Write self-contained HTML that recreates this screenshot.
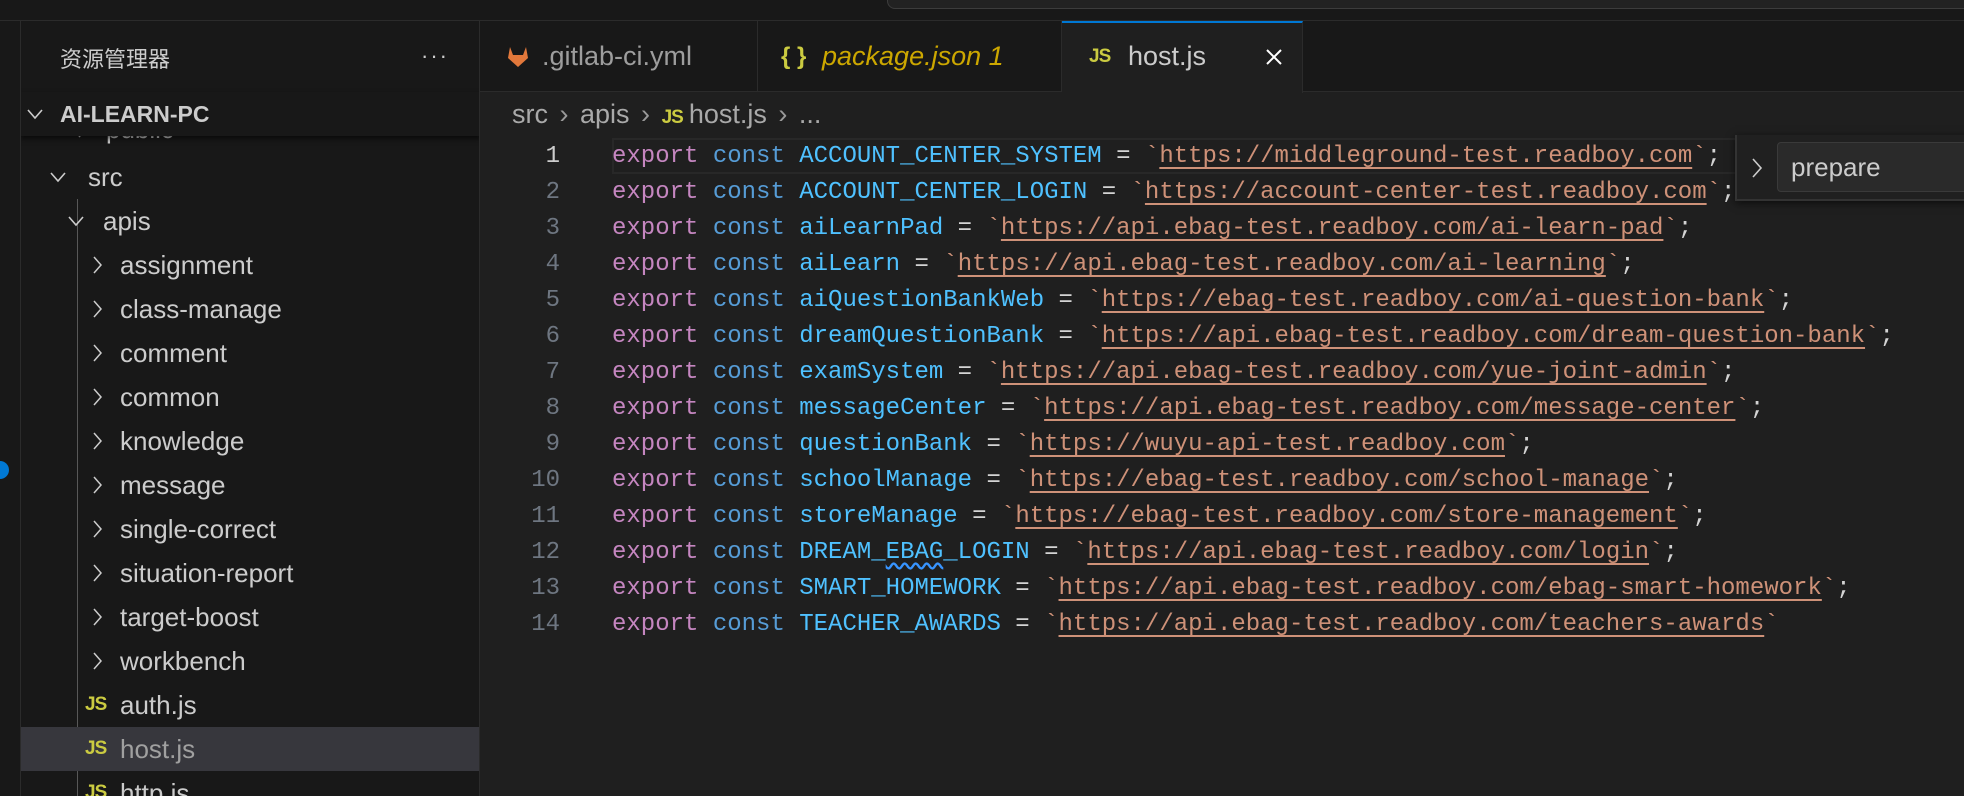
<!DOCTYPE html>
<html><head><meta charset="utf-8"><style>
*{margin:0;padding:0;box-sizing:border-box}
html,body{width:1964px;height:796px;overflow:hidden}
body{background:#1f1f1f;position:relative;font-family:"Liberation Sans","Noto Sans CJK SC",sans-serif;color:#cccccc}
.abs{position:absolute}
#top{left:0;top:0;width:1964px;height:21px;background:#181818;border-bottom:1px solid #2b2b2b}
#search{left:887px;top:-10px;width:1100px;height:19px;border:1px solid #3c3c3c;border-radius:8px;background:#222}
#act{left:0;top:21px;width:21px;height:775px;background:#181818;border-right:1px solid #2b2b2b}
#side{left:21px;top:21px;width:459px;height:775px;background:#181818;border-right:1px solid #2b2b2b;overflow:hidden}
.row{position:absolute;left:0;width:459px;height:44px;line-height:44px;font-size:26px;color:#cccccc;white-space:nowrap}
.chev{position:absolute;top:12px;width:11px;height:20px}
.js{font-family:"Liberation Sans",sans-serif;font-weight:bold;color:#cbcb41;font-size:19px;position:absolute;letter-spacing:-1px}
#tabs{left:480px;top:21px;width:1484px;height:71px;background:#181818;border-bottom:1px solid #2b2b2b}
.tab{position:absolute;top:0;height:71px;line-height:71px;font-size:27px;border-right:1px solid #2b2b2b;color:#9d9d9d}
.ln{position:absolute;width:80px;text-align:right;left:480px;font-family:"Liberation Mono",monospace;font-size:24px;color:#6e7681;height:36px;line-height:36px}
.code{position:absolute;left:612px;font-family:"Liberation Mono",monospace;font-size:24px;height:36px;line-height:36px;white-space:pre;color:#d4d4d4}
.k{color:#c586c0}.c{color:#569cd6}.v{color:#4fc1ff}.s{color:#ce9178}.u{text-decoration:underline;text-underline-offset:5px}
</style></head><body>
<div id="top" class="abs"></div>
<div id="search" class="abs"></div>
<div id="act" class="abs"></div>
<div class="abs" style="left:-9px;top:461px;width:18px;height:18px;border-radius:50%;background:#0078d4"></div>
<div id="side" class="abs">
  <div class="abs" style="left:39px;top:21px;font-size:22px;color:#cccccc">资源管理器</div>
  <div class="abs" style="left:400px;top:22px;font-size:22px;color:#cccccc;letter-spacing:2px">···</div>
  <div class="row" style="top:86px"><svg class="chev" style="left:56px" viewBox="0 0 11 20"><path d="M2 2l7 8-7 8" stroke="#ccc" stroke-width="1.5" fill="none"/></svg><span style="position:absolute;left:85px">public</span></div>
  <div class="abs" style="left:0;top:71px;width:459px;height:44px;background:#181818;box-shadow:0 3px 5px rgba(0,0,0,.6)">
    <svg class="abs" style="left:5px;top:16px" width="18" height="12" viewBox="0 0 18 12"><path d="M2 2l7 8 7-8" stroke="#ccc" stroke-width="1.6" fill="none"/></svg>
    <span class="abs" style="left:39px;top:0;line-height:44px;font-size:23px;font-weight:bold;color:#cccccc">AI-LEARN-PC</span>
  </div>
  <div class="abs" style="left:56px;top:178px;width:1px;height:600px;background:#585858"></div>
  <div class="row" style="top:134px"><svg class="abs" style="left:28px;top:16px" width="18" height="12" viewBox="0 0 18 12"><path d="M2 2l7 8 7-8" stroke="#ccc" stroke-width="1.6" fill="none"/></svg><span style="position:absolute;left:67px">src</span></div>
  <div class="row" style="top:178px"><svg class="abs" style="left:46px;top:16px" width="18" height="12" viewBox="0 0 18 12"><path d="M2 2l7 8 7-8" stroke="#ccc" stroke-width="1.6" fill="none"/></svg><span style="position:absolute;left:82px">apis</span></div>
  <div class="row" style="top:222px"><svg class="chev" style="left:71px" viewBox="0 0 11 20"><path d="M2 2l7 8-7 8" stroke="#ccc" stroke-width="1.5" fill="none"/></svg><span style="position:absolute;left:99px">assignment</span></div>
  <div class="row" style="top:266px"><svg class="chev" style="left:71px" viewBox="0 0 11 20"><path d="M2 2l7 8-7 8" stroke="#ccc" stroke-width="1.5" fill="none"/></svg><span style="position:absolute;left:99px">class-manage</span></div>
  <div class="row" style="top:310px"><svg class="chev" style="left:71px" viewBox="0 0 11 20"><path d="M2 2l7 8-7 8" stroke="#ccc" stroke-width="1.5" fill="none"/></svg><span style="position:absolute;left:99px">comment</span></div>
  <div class="row" style="top:354px"><svg class="chev" style="left:71px" viewBox="0 0 11 20"><path d="M2 2l7 8-7 8" stroke="#ccc" stroke-width="1.5" fill="none"/></svg><span style="position:absolute;left:99px">common</span></div>
  <div class="row" style="top:398px"><svg class="chev" style="left:71px" viewBox="0 0 11 20"><path d="M2 2l7 8-7 8" stroke="#ccc" stroke-width="1.5" fill="none"/></svg><span style="position:absolute;left:99px">knowledge</span></div>
  <div class="row" style="top:442px"><svg class="chev" style="left:71px" viewBox="0 0 11 20"><path d="M2 2l7 8-7 8" stroke="#ccc" stroke-width="1.5" fill="none"/></svg><span style="position:absolute;left:99px">message</span></div>
  <div class="row" style="top:486px"><svg class="chev" style="left:71px" viewBox="0 0 11 20"><path d="M2 2l7 8-7 8" stroke="#ccc" stroke-width="1.5" fill="none"/></svg><span style="position:absolute;left:99px">single-correct</span></div>
  <div class="row" style="top:530px"><svg class="chev" style="left:71px" viewBox="0 0 11 20"><path d="M2 2l7 8-7 8" stroke="#ccc" stroke-width="1.5" fill="none"/></svg><span style="position:absolute;left:99px">situation-report</span></div>
  <div class="row" style="top:574px"><svg class="chev" style="left:71px" viewBox="0 0 11 20"><path d="M2 2l7 8-7 8" stroke="#ccc" stroke-width="1.5" fill="none"/></svg><span style="position:absolute;left:99px">target-boost</span></div>
  <div class="row" style="top:618px"><svg class="chev" style="left:71px" viewBox="0 0 11 20"><path d="M2 2l7 8-7 8" stroke="#ccc" stroke-width="1.5" fill="none"/></svg><span style="position:absolute;left:99px">workbench</span></div>
  <div class="row" style="top:662px"><span class="js" style="left:64px">JS</span><span style="position:absolute;left:99px">auth.js</span></div>
  <div class="row" style="top:706px;background:#37373d;left:0"><span class="js" style="left:64px">JS</span><span style="position:absolute;left:99px;color:#a0a0a0">host.js</span></div>
  <div class="row" style="top:750px"><span class="js" style="left:64px">JS</span><span style="position:absolute;left:99px">http.js</span></div>
</div>
<div id="tabs" class="abs">
  <div class="tab" style="left:0;width:278px">
    <svg class="abs" style="left:27px;top:24px" width="22" height="24" viewBox="0 0 22 24"><path d="M11 22L1 13 3 2l3 8h10l3-8 2 11z" fill="#e2783b"/></svg>
    <span class="abs" style="left:62px">.gitlab-ci.yml</span></div>
  <div class="tab" style="left:278px;width:304px">
    <span class="abs" style="left:23px;color:#cbcb41;font-size:24px;font-weight:bold">{ }</span>
    <span class="abs" style="left:64px;color:#cca700;font-style:italic">package.json 1</span></div>
  <div class="tab" style="left:582px;width:241px;background:#1f1f1f;border-top:2px solid #0078d4;height:72px;color:#ffffff">
    <span class="js" style="left:27px;top:-2px;line-height:71px">JS</span>
    <span class="abs" style="left:66px;top:-2px;color:#cccccc">host.js</span>
    <svg class="abs" style="left:202px;top:24px" width="20" height="20" viewBox="0 0 20 20"><path d="M3 3l14 14M17 3L3 17" stroke="#fff" stroke-width="2"/></svg></div>
</div>
<div class="abs" style="left:512px;top:96px;height:36px;line-height:36px;font-size:27px;color:#a9a9a9;white-space:nowrap">src <span style="color:#999;margin:0 4px">&#x203A;</span> apis <span style="color:#999;margin:0 4px">&#x203A;</span> <span style="color:#cbcb41;font-weight:bold;font-size:19px;letter-spacing:-1px;margin-right:6px">JS</span>host.js <span style="color:#999;margin:0 4px">&#x203A;</span> ...</div>
<div class="abs" style="left:612px;top:138px;width:1125px;height:36px;border:2px solid #282828"></div>
<div class="ln" style="top:139px;color:#cccccc">1</div>
<div class="ln" style="top:175px">2</div><div class="ln" style="top:211px">3</div><div class="ln" style="top:247px">4</div><div class="ln" style="top:283px">5</div><div class="ln" style="top:319px">6</div><div class="ln" style="top:355px">7</div><div class="ln" style="top:391px">8</div><div class="ln" style="top:427px">9</div><div class="ln" style="top:463px">10</div><div class="ln" style="top:499px">11</div><div class="ln" style="top:535px">12</div><div class="ln" style="top:571px">13</div><div class="ln" style="top:607px">14</div>
<div class="code" style="top:139px"><span class="k">export</span> <span class="c">const</span> <span class="v">ACCOUNT_CENTER_SYSTEM</span> = <span class="s">`<span class="u">https://middleground-test.readboy.com</span>`</span>;</div>
<div class="code" style="top:175px"><span class="k">export</span> <span class="c">const</span> <span class="v">ACCOUNT_CENTER_LOGIN</span> = <span class="s">`<span class="u">https://account-center-test.readboy.com</span>`</span>;</div>
<div class="code" style="top:211px"><span class="k">export</span> <span class="c">const</span> <span class="v">aiLearnPad</span> = <span class="s">`<span class="u">https://api.ebag-test.readboy.com/ai-learn-pad</span>`</span>;</div>
<div class="code" style="top:247px"><span class="k">export</span> <span class="c">const</span> <span class="v">aiLearn</span> = <span class="s">`<span class="u">https://api.ebag-test.readboy.com/ai-learning</span>`</span>;</div>
<div class="code" style="top:283px"><span class="k">export</span> <span class="c">const</span> <span class="v">aiQuestionBankWeb</span> = <span class="s">`<span class="u">https://ebag-test.readboy.com/ai-question-bank</span>`</span>;</div>
<div class="code" style="top:319px"><span class="k">export</span> <span class="c">const</span> <span class="v">dreamQuestionBank</span> = <span class="s">`<span class="u">https://api.ebag-test.readboy.com/dream-question-bank</span>`</span>;</div>
<div class="code" style="top:355px"><span class="k">export</span> <span class="c">const</span> <span class="v">examSystem</span> = <span class="s">`<span class="u">https://api.ebag-test.readboy.com/yue-joint-admin</span>`</span>;</div>
<div class="code" style="top:391px"><span class="k">export</span> <span class="c">const</span> <span class="v">messageCenter</span> = <span class="s">`<span class="u">https://api.ebag-test.readboy.com/message-center</span>`</span>;</div>
<div class="code" style="top:427px"><span class="k">export</span> <span class="c">const</span> <span class="v">questionBank</span> = <span class="s">`<span class="u">https://wuyu-api-test.readboy.com</span>`</span>;</div>
<div class="code" style="top:463px"><span class="k">export</span> <span class="c">const</span> <span class="v">schoolManage</span> = <span class="s">`<span class="u">https://ebag-test.readboy.com/school-manage</span>`</span>;</div>
<div class="code" style="top:499px"><span class="k">export</span> <span class="c">const</span> <span class="v">storeManage</span> = <span class="s">`<span class="u">https://ebag-test.readboy.com/store-management</span>`</span>;</div>
<div class="code" style="top:535px"><span class="k">export</span> <span class="c">const</span> <span class="v">DREAM_<span style="text-decoration:underline wavy #3794ff;text-underline-offset:4px">EBAG</span>_LOGIN</span> = <span class="s">`<span class="u">https://api.ebag-test.readboy.com/login</span>`</span>;</div>
<div class="code" style="top:571px"><span class="k">export</span> <span class="c">const</span> <span class="v">SMART_HOMEWORK</span> = <span class="s">`<span class="u">https://api.ebag-test.readboy.com/ebag-smart-homework</span>`</span>;</div>
<div class="code" style="top:607px"><span class="k">export</span> <span class="c">const</span> <span class="v">TEACHER_AWARDS</span> = <span class="s">`<span class="u">https://api.ebag-test.readboy.com/teachers-awards</span>`</span></div>
<div class="abs" style="left:1735px;top:135px;width:240px;height:66px;background:#202020;border-left:2px solid #333;border-bottom:2px solid #333;box-shadow:0 2px 8px rgba(0,0,0,.6)">
  <svg class="abs" style="left:14px;top:22px" width="12" height="22" viewBox="0 0 12 22"><path d="M2 2l8 9-8 9" stroke="#ccc" stroke-width="1.6" fill="none"/></svg>
  <div class="abs" style="left:40px;top:7px;width:220px;height:50px;background:#2a2a2a;border:1px solid #3a3a3a;border-radius:4px;font-size:26px;line-height:48px;padding-left:13px;color:#cccccc">prepare</div>
</div>
</body></html>
